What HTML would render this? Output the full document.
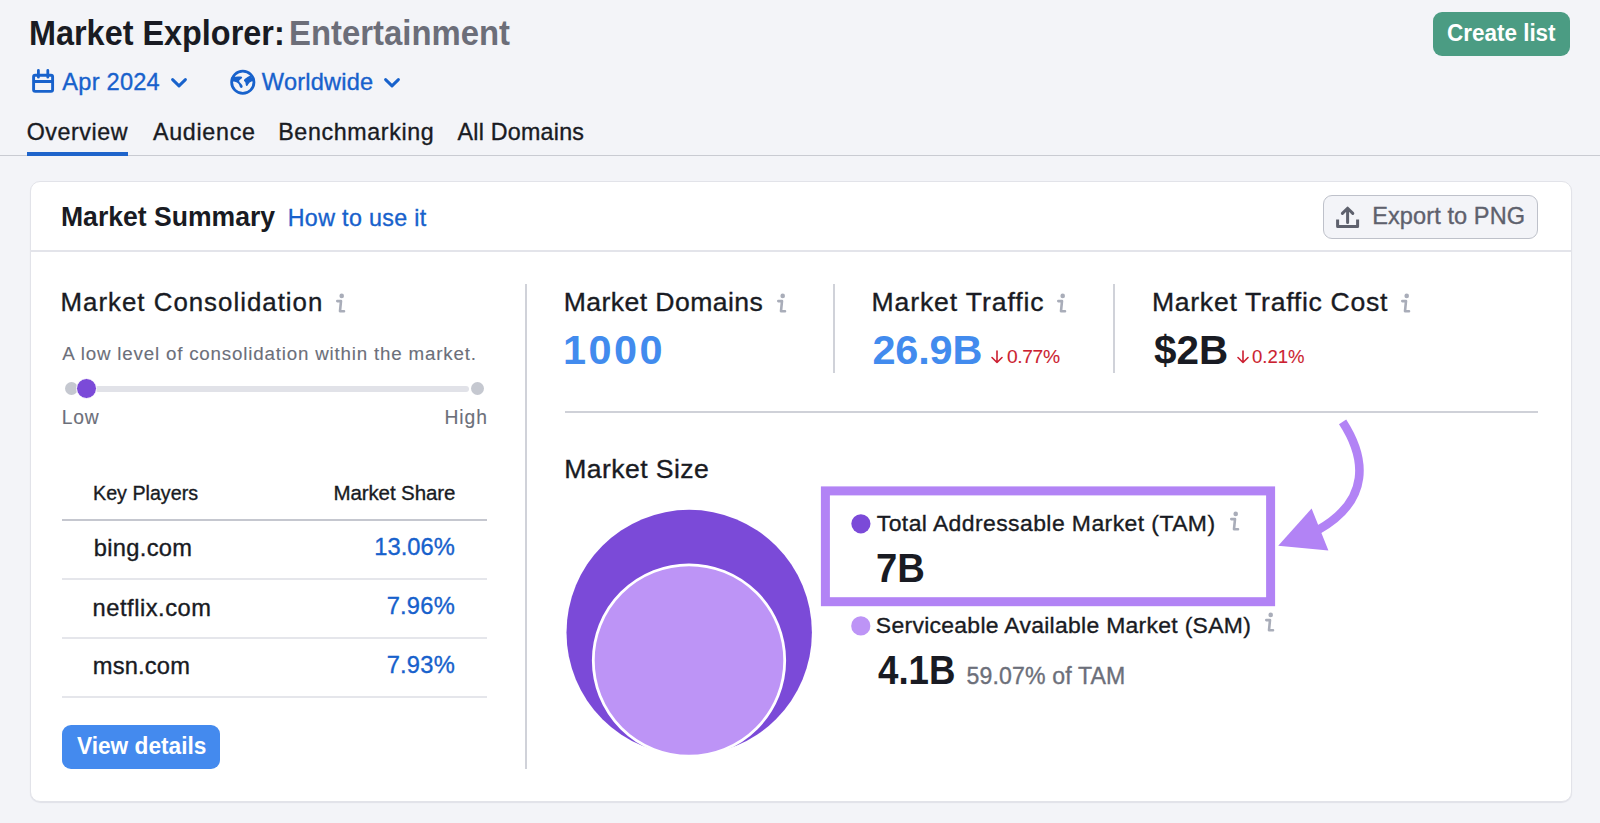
<!DOCTYPE html>
<html><head><meta charset="utf-8"><title>Market Explorer</title><style>
html,body{margin:0;padding:0}
body{width:1600px;height:823px;position:relative;overflow:hidden;background:#f3f4f8;font-family:"Liberation Sans",sans-serif}
.a{position:absolute}
.t{position:absolute;white-space:nowrap;font-family:"Liberation Sans",sans-serif}
</style></head><body>

<!-- header -->
<svg class="a" style="left:28px;top:66px" width="30" height="30" viewBox="0 0 30 30">
 <rect x="5.6" y="9.2" width="19" height="16.2" rx="1.6" fill="none" stroke="#1862cc" stroke-width="2.9"/>
 <path d="M5.6 15.5H24.6" stroke="#1862cc" stroke-width="3"/>
 <path d="M10.4 4.4V11.2M19.8 4.4V11.2" stroke="#1862cc" stroke-width="2.8" stroke-linecap="round"/>
</svg>
<svg class="a" style="left:168px;top:74px" width="22" height="18" viewBox="0 0 22 18"><path d="M4.6 5.6L11 11.8L17.4 5.6" fill="none" stroke="#1862cc" stroke-width="3" stroke-linecap="round" stroke-linejoin="round"/></svg>
<svg class="a" style="left:228px;top:67px" width="30" height="30" viewBox="0 0 30 30">
 <circle cx="14.8" cy="15.25" r="11.15" fill="none" stroke="#1862cc" stroke-width="2.8"/>
 <path d="M3.4 10.4C6.5 9.8 10 9.4 12.8 9.5C14.3 9.6 14.6 10.6 13.6 11.4C12.2 12.4 10.9 13.2 11.2 14.2C11.6 15.4 13.2 16.6 14.3 18.2C15.2 19.6 14.2 21.4 12.8 20.8C11.9 20.4 11.6 19 11.2 17.9C10.6 16.4 9.6 15.6 8.4 15.2C6.6 14.7 5.2 14.6 3.8 14.6Z" fill="#1862cc"/>
 <path d="M22.4 8.4C20.4 9.4 18.4 10.6 17 11.8C15.8 12.8 15.6 13.9 16.6 14.5C17.6 15.1 17.6 16.6 17.8 18C18 19.2 19.2 19.4 19.8 18.2C20.4 16.8 21.2 15.6 22.6 14.9C23.8 14.3 25 13.8 25.6 13.4Z" fill="#1862cc"/>
</svg>
<svg class="a" style="left:381px;top:74px" width="22" height="18" viewBox="0 0 22 18"><path d="M4.6 5.6L11 11.8L17.4 5.6" fill="none" stroke="#1862cc" stroke-width="3" stroke-linecap="round" stroke-linejoin="round"/></svg>
<div class="a" style="left:1433px;top:12px;width:137px;height:44px;border-radius:9px;background:#4b9c83"></div>
<div class="a" style="left:0;top:155px;width:1600px;height:1px;background:#c9cbd2"></div>
<div class="a" style="left:27px;top:152px;width:101px;height:4px;background:#1e64cb"></div>

<!-- card -->
<div class="a" style="left:29.5px;top:180.5px;width:1540px;height:619px;border:1px solid #e2e3e9;border-radius:10px;background:#fff;box-shadow:0 1px 1px rgba(30,30,60,0.08)"></div>
<div class="a" style="left:30px;top:250px;width:1541px;height:1.5px;background:#e3e4ea"></div>
<div class="a" style="left:1323px;top:195px;width:213px;height:42px;border:1.5px solid #bec1ca;border-radius:9px;background:#f3f4f8"></div>
<svg class="a" style="left:1334px;top:204px" width="26" height="26" viewBox="0 0 26 26">
 <path d="M3.6 15.6V22.6H23.6V15.6" fill="none" stroke="#5e616d" stroke-width="3" stroke-linejoin="round" stroke-linecap="butt"/>
 <path d="M13.6 18.4V4.6M8.4 9.4L13.6 4.2L18.8 9.4" fill="none" stroke="#5e616d" stroke-width="3" stroke-linecap="round" stroke-linejoin="round"/>
</svg>

<!-- left column -->
<svg class="a" style="left:335.0px;top:292.6px" width="13" height="22" viewBox="0 0 13 22"><circle cx="6.7" cy="2.9" r="2.3" fill="#a9adb9"/><path d="M2.3 8.1H6.0L5.0 18.2H9.0" fill="none" stroke="#a9adb9" stroke-width="2.6" stroke-linecap="round" stroke-linejoin="round"/></svg>
<div class="a" style="left:95px;top:385.6px;width:374px;height:6.4px;background:#e1e2e8;border-radius:3px"></div>
<div class="a" style="left:64.5px;top:382.3px;width:13px;height:13px;border-radius:50%;background:#c5c8d0"></div>
<div class="a" style="left:470.6px;top:382.1px;width:13.4px;height:13.4px;border-radius:50%;background:#c5c8d0"></div>
<div class="a" style="left:75.9px;top:378.3px;width:19px;height:19px;border-radius:50%;background:#7b4ad8;border:1px solid #fff"></div>
<div class="a" style="left:62px;top:519px;width:425px;height:2px;background:#c5c7cf"></div>
<div class="a" style="left:62px;top:578px;width:425px;height:2px;background:#e5e6eb"></div>
<div class="a" style="left:62px;top:637px;width:425px;height:2px;background:#e5e6eb"></div>
<div class="a" style="left:62px;top:696px;width:425px;height:2px;background:#e5e6eb"></div>
<div class="a" style="left:62px;top:725px;width:158px;height:43.5px;border-radius:9px;background:#448aee"></div>
<div class="a" style="left:525px;top:284px;width:2px;height:485px;background:#d0d2d9"></div>

<!-- metrics -->
<svg class="a" style="left:776.2px;top:292.5px" width="13" height="22" viewBox="0 0 13 22"><circle cx="6.7" cy="2.9" r="2.3" fill="#a9adb9"/><path d="M2.3 8.1H6.0L5.0 18.2H9.0" fill="none" stroke="#a9adb9" stroke-width="2.6" stroke-linecap="round" stroke-linejoin="round"/></svg>
<div class="a" style="left:833px;top:284px;width:2px;height:89px;background:#d0d2d9"></div>
<svg class="a" style="left:1056.2px;top:292.5px" width="13" height="22" viewBox="0 0 13 22"><circle cx="6.7" cy="2.9" r="2.3" fill="#a9adb9"/><path d="M2.3 8.1H6.0L5.0 18.2H9.0" fill="none" stroke="#a9adb9" stroke-width="2.6" stroke-linecap="round" stroke-linejoin="round"/></svg>
<svg class="a" style="left:990.4px;top:348.5px" width="14" height="16" viewBox="0 0 14 16"><path d="M7 2V13.5M2 8.5L7 13.5L12 8.5" fill="none" stroke="#cc1f31" stroke-width="1.6" stroke-linecap="round" stroke-linejoin="round"/></svg>
<div class="a" style="left:1113px;top:284px;width:2px;height:89px;background:#d0d2d9"></div>
<svg class="a" style="left:1400.4px;top:292.5px" width="13" height="22" viewBox="0 0 13 22"><circle cx="6.7" cy="2.9" r="2.3" fill="#a9adb9"/><path d="M2.3 8.1H6.0L5.0 18.2H9.0" fill="none" stroke="#a9adb9" stroke-width="2.6" stroke-linecap="round" stroke-linejoin="round"/></svg>
<svg class="a" style="left:1236.0px;top:348.5px" width="14" height="16" viewBox="0 0 14 16"><path d="M7 2V13.5M2 8.5L7 13.5L12 8.5" fill="none" stroke="#cc1f31" stroke-width="1.6" stroke-linecap="round" stroke-linejoin="round"/></svg>
<div class="a" style="left:565px;top:411px;width:973px;height:2px;background:#cfd1d8"></div>

<!-- market size -->
<svg class="a" style="left:0;top:0" width="1600" height="823" viewBox="0 0 1600 823">
 <circle cx="689.2" cy="632.5" r="122.7" fill="#7b4ad8"/>
 <circle cx="689.0" cy="660.5" r="95.7" fill="#bd94f6" stroke="#fff" stroke-width="2.8"/>
 <rect x="825.4" y="490.9" width="445.2" height="110.8" fill="none" stroke="#b283f5" stroke-width="9"/>
 <circle cx="860.9" cy="523.8" r="9.6" fill="#7b4ad8"/>
 <circle cx="860.8" cy="625.9" r="9.6" fill="#bd94f6"/>
 <path d="M1342.6 421.8C1366 458 1371 500 1318 530" fill="none" stroke="#b283f5" stroke-width="8.6"/>
 <path d="M1278.2 545.8L1311.6 508.4L1328.4 550.4Z" fill="#b283f5"/>
</svg>
<svg class="a" style="left:1229.2px;top:510.6px" width="13" height="22" viewBox="0 0 13 22"><circle cx="6.7" cy="2.9" r="2.3" fill="#a9adb9"/><path d="M2.3 8.1H6.0L5.0 18.2H9.0" fill="none" stroke="#a9adb9" stroke-width="2.6" stroke-linecap="round" stroke-linejoin="round"/></svg>
<svg class="a" style="left:1264.0px;top:612.0px" width="13" height="22" viewBox="0 0 13 22"><circle cx="6.7" cy="2.9" r="2.3" fill="#a9adb9"/><path d="M2.3 8.1H6.0L5.0 18.2H9.0" fill="none" stroke="#a9adb9" stroke-width="2.6" stroke-linecap="round" stroke-linejoin="round"/></svg>

<div id="title1" class="t" style="left:29.49px;top:16.00px;font-size:34.45px;line-height:34.45px;font-weight:700;color:#191b23;letter-spacing:0.000px;transform:scaleX(0.9408);transform-origin:0 0">Market Explorer:</div>
<div id="title2" class="t" style="left:288.66px;top:16.00px;font-size:34.45px;line-height:34.45px;font-weight:700;color:#6c6e79;letter-spacing:0.000px;transform:scaleX(0.9545);transform-origin:0 0">Entertainment</div>
<div id="apr" class="t" style="left:62.32px;top:71.00px;font-size:23.60px;line-height:23.60px;font-weight:400;color:#1761cc;letter-spacing:0.236px;-webkit-text-stroke:0.35px #1761cc">Apr 2024</div>
<div id="ww" class="t" style="left:261.87px;top:71.00px;font-size:23.60px;line-height:23.60px;font-weight:400;color:#1761cc;letter-spacing:0.208px;-webkit-text-stroke:0.35px #1761cc">Worldwide</div>
<div id="tab1" class="t" style="left:26.71px;top:121.00px;font-size:23.25px;line-height:23.25px;font-weight:400;color:#191b23;letter-spacing:0.552px;-webkit-text-stroke:0.35px #191b23">Overview</div>
<div id="tab2" class="t" style="left:152.92px;top:121.00px;font-size:23.25px;line-height:23.25px;font-weight:400;color:#191b23;letter-spacing:0.732px;-webkit-text-stroke:0.35px #191b23">Audience</div>
<div id="tab3" class="t" style="left:278.19px;top:121.00px;font-size:23.25px;line-height:23.25px;font-weight:400;color:#191b23;letter-spacing:0.632px;-webkit-text-stroke:0.35px #191b23">Benchmarking</div>
<div id="tab4" class="t" style="left:457.57px;top:121.00px;font-size:23.25px;line-height:23.25px;font-weight:400;color:#191b23;letter-spacing:0.233px;-webkit-text-stroke:0.35px #191b23">All Domains</div>
<div id="create" class="t" style="left:1446.51px;top:21.00px;font-size:24.40px;line-height:24.40px;font-weight:700;color:#ffffff;letter-spacing:0.000px;transform:scaleX(0.9207);transform-origin:0 0">Create list</div>
<div id="msum" class="t" style="left:61.11px;top:203.00px;font-size:27.60px;line-height:27.60px;font-weight:700;color:#191b23;letter-spacing:0.000px;transform:scaleX(0.9625);transform-origin:0 0">Market Summary</div>
<div id="howto" class="t" style="left:287.74px;top:207.00px;font-size:23.25px;line-height:23.25px;font-weight:400;color:#1761cc;letter-spacing:0.349px;-webkit-text-stroke:0.35px #1761cc">How to use it</div>
<div id="export" class="t" style="left:1372.22px;top:205.00px;font-size:23.55px;line-height:23.55px;font-weight:400;color:#5e616d;letter-spacing:0.087px;-webkit-text-stroke:0.35px #5e616d">Export to PNG</div>
<div id="mcons" class="t" style="left:60.57px;top:290.00px;font-size:25.85px;line-height:25.85px;font-weight:400;color:#191b23;letter-spacing:0.999px;-webkit-text-stroke:0.35px #191b23">Market Consolidation</div>
<div id="alow" class="t" style="left:62.37px;top:345.00px;font-size:18.75px;line-height:18.75px;font-weight:400;color:#6c6f7a;letter-spacing:0.811px;-webkit-text-stroke:0.12px #6c6f7a">A low level of consolidation within the market.</div>
<div id="low" class="t" style="left:61.69px;top:408.00px;font-size:19.30px;line-height:19.30px;font-weight:400;color:#6c6f7a;letter-spacing:0.761px;-webkit-text-stroke:0.12px #6c6f7a">Low</div>
<div id="high" class="t" style="left:444.45px;top:408.00px;font-size:19.30px;line-height:19.30px;font-weight:400;color:#6c6f7a;letter-spacing:0.988px;-webkit-text-stroke:0.12px #6c6f7a">High</div>
<div id="kp" class="t" style="left:92.87px;top:483.00px;font-size:20.50px;line-height:20.50px;font-weight:400;color:#191b23;letter-spacing:0.000px;-webkit-text-stroke:0.35px #191b23;transform:scaleX(0.9603);transform-origin:0 0">Key Players</div>
<div id="ms" class="t" style="left:333.45px;top:483.00px;font-size:20.50px;line-height:20.50px;font-weight:400;color:#191b23;letter-spacing:-0.097px;-webkit-text-stroke:0.35px #191b23">Market Share</div>
<div id="bing" class="t" style="left:93.79px;top:537.00px;font-size:23.70px;line-height:23.70px;font-weight:400;color:#191b23;letter-spacing:0.302px;-webkit-text-stroke:0.35px #191b23">bing.com</div>
<div id="p1" class="t" style="left:374.37px;top:536.00px;font-size:23.70px;line-height:23.70px;font-weight:400;color:#1761cc;letter-spacing:0.010px;-webkit-text-stroke:0.35px #1761cc">13.06%</div>
<div id="netflix" class="t" style="left:92.60px;top:597.00px;font-size:23.70px;line-height:23.70px;font-weight:400;color:#191b23;letter-spacing:0.516px;-webkit-text-stroke:0.35px #191b23">netflix.com</div>
<div id="p2" class="t" style="left:386.65px;top:595.00px;font-size:23.70px;line-height:23.70px;font-weight:400;color:#1761cc;letter-spacing:0.233px;-webkit-text-stroke:0.35px #1761cc">7.96%</div>
<div id="msn" class="t" style="left:92.78px;top:655.00px;font-size:23.70px;line-height:23.70px;font-weight:400;color:#191b23;letter-spacing:0.176px;-webkit-text-stroke:0.35px #191b23">msn.com</div>
<div id="p3" class="t" style="left:386.65px;top:654.00px;font-size:23.70px;line-height:23.70px;font-weight:400;color:#1761cc;letter-spacing:0.233px;-webkit-text-stroke:0.35px #1761cc">7.93%</div>
<div id="view" class="t" style="left:76.85px;top:734.00px;font-size:24.25px;line-height:24.25px;font-weight:700;color:#ffffff;letter-spacing:0.000px;transform:scaleX(0.9347);transform-origin:0 0">View details</div>
<div id="mdom" class="t" style="left:563.81px;top:289.00px;font-size:26.60px;line-height:26.60px;font-weight:400;color:#191b23;letter-spacing:0.416px;-webkit-text-stroke:0.35px #191b23">Market Domains</div>
<div id="v1000" class="t" style="left:562.95px;top:329.00px;font-size:41.45px;line-height:41.45px;font-weight:700;color:#428bee;letter-spacing:2.448px">1000</div>
<div id="mtraf" class="t" style="left:871.42px;top:289.00px;font-size:26.60px;line-height:26.60px;font-weight:400;color:#191b23;letter-spacing:0.894px;-webkit-text-stroke:0.35px #191b23">Market Traffic</div>
<div id="v269" class="t" style="left:872.39px;top:329.00px;font-size:41.45px;line-height:41.45px;font-weight:700;color:#428bee;letter-spacing:-0.130px">26.9B</div>
<div id="d077" class="t" style="left:1007.06px;top:347.00px;font-size:19.25px;line-height:19.25px;font-weight:400;color:#cc1f31;letter-spacing:-0.398px;-webkit-text-stroke:0.1px #cc1f31">0.77%</div>
<div id="mtc" class="t" style="left:1151.93px;top:289.00px;font-size:26.60px;line-height:26.60px;font-weight:400;color:#191b23;letter-spacing:0.715px;-webkit-text-stroke:0.35px #191b23">Market Traffic Cost</div>
<div id="v2b" class="t" style="left:1153.68px;top:329.00px;font-size:41.45px;line-height:41.45px;font-weight:700;color:#191b23;letter-spacing:0.000px;transform:scaleX(0.9757);transform-origin:0 0">$2B</div>
<div id="d021" class="t" style="left:1251.79px;top:347.00px;font-size:19.25px;line-height:19.25px;font-weight:400;color:#cc1f31;letter-spacing:0.000px;-webkit-text-stroke:0.1px #cc1f31;transform:scaleX(0.9633);transform-origin:0 0">0.21%</div>
<div id="msize" class="t" style="left:564.14px;top:456.00px;font-size:26.60px;line-height:26.60px;font-weight:400;color:#191b23;letter-spacing:0.432px;-webkit-text-stroke:0.35px #191b23">Market Size</div>
<div id="tam" class="t" style="left:876.78px;top:512.00px;font-size:22.95px;line-height:22.95px;font-weight:400;color:#191b23;letter-spacing:0.426px;-webkit-text-stroke:0.35px #191b23">Total Addressable Market (TAM)</div>
<div id="v7b" class="t" style="left:876.28px;top:548.00px;font-size:40.10px;line-height:40.10px;font-weight:700;color:#191b23;letter-spacing:0.000px;transform:scaleX(0.9543);transform-origin:0 0">7B</div>
<div id="sam" class="t" style="left:875.83px;top:614.00px;font-size:22.95px;line-height:22.95px;font-weight:400;color:#191b23;letter-spacing:0.288px;-webkit-text-stroke:0.35px #191b23">Serviceable Available Market (SAM)</div>
<div id="v41b" class="t" style="left:877.64px;top:650.00px;font-size:40.55px;line-height:40.55px;font-weight:700;color:#191b23;letter-spacing:0.000px;transform:scaleX(0.9043);transform-origin:0 0">4.1B</div>
<div id="of" class="t" style="left:966.48px;top:665.00px;font-size:23.10px;line-height:23.10px;font-weight:400;color:#6c6f7a;letter-spacing:0.144px;-webkit-text-stroke:0.35px #6c6f7a">59.07% of TAM</div>
</body></html>
